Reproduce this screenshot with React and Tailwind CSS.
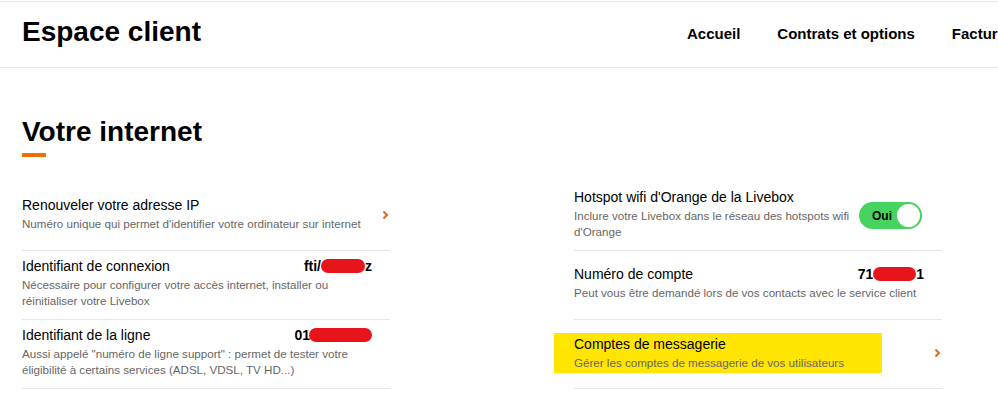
const ROWS = [
  {
    left: {
      title: 'Renouveler votre adresse IP',
      desc: "Numéro unique qui permet d'identifier votre ordinateur sur internet",
      chevron: true,
    },
    right: {
      title: "Hotspot wifi d'Orange de la Livebox",
      desc: "Inclure votre Livebox dans le réseau des hotspots wifi d'Orange",
      toggle: true,
    },
  },
  {
    left: {
      title: 'Identifiant de connexion',
      desc: 'Nécessaire pour configurer votre accès internet, installer ou réinitialiser votre Livebox',
      value: ['fti/', 'w-[44px]', 'z'],
    },
    right: {
      title: 'Numéro de compte',
      desc: 'Peut vous être demandé lors de vos contacts avec le service client',
      value: ['71', 'w-[43px]', '1'],
    },
  },
  {
    left: {
      title: 'Identifiant de la ligne',
      desc: 'Aussi appelé "numéro de ligne support" : permet de tester votre éligibilité à certains services (ADSL, VDSL, TV HD...)',
      value: ['01', 'w-[63px] -ml-[1px]', ''],
    },
    right: {
      title: 'Comptes de messagerie',
      desc: 'Gérer les comptes de messagerie de vos utilisateurs',
      chevron: true,
      highlight: true,
    },
  },
]

function Chevron() {
  return (
    <svg width="7" height="10" viewBox="0 0 7 10" className="shrink-0 mt-[4px] mr-[1px]">
      <path d="M1.5 1.5 5 5 1.5 8.5" fill="none" stroke="#dc6a24" strokeWidth="2" />
    </svg>
  )
}

function Redacted({ value }) {
  const [before, pillWidth, after] = value
  return (
    <span className="flex items-center whitespace-nowrap text-[14px] font-bold leading-[20px] text-black">
      {before}
      <span className={`inline-block h-[14px] rounded-full bg-[#e8141b] ${pillWidth}`} />
      {after}
    </span>
  )
}

function Toggle() {
  return (
    <div className="ml-auto mr-[20px] mt-[5px] flex h-[27px] w-[63px] shrink-0 items-center rounded-full bg-[#47d35f]">
      <span className="ml-[13px] text-[12px] font-bold leading-none text-black">Oui</span>
      <span className="ml-auto mr-[2px] h-[23px] w-[23px] rounded-full bg-white" />
    </div>
  )
}

function Cell({ item }) {
  const text = (
    <div className={item.toggle ? 'w-[280px]' : 'flex-1'}>
      <div className="flex items-center justify-between pr-[18px]">
        <span className="text-[14px] leading-[20px] text-black">{item.title}</span>
        {item.value ? <Redacted value={item.value} /> : null}
      </div>
      <p className={`mt-[1px] text-[11.6px] leading-[16px] text-[#666] ${item.toggle ? '' : 'pr-[18px]'}`}>
        {item.desc}
      </p>
    </div>
  )

  return (
    <div className="flex h-[69px] items-center border-b border-[#e6e6e6] pb-[6px]">
      {item.highlight ? (
        <div className="-ml-[20px] mt-[4px] w-[328px] bg-[#ffe500] pb-[2px] pl-[20px] pt-[1px]">{text}</div>
      ) : (
        text
      )}
      {item.toggle ? <Toggle /> : null}
      {item.chevron ? <div className="ml-auto flex">{<Chevron />}</div> : null}
    </div>
  )
}

export default function App() {
  return (
    <div className="h-[407px] w-[998px] overflow-hidden bg-white font-['Liberation_Sans',Arial,sans-serif] text-black">
      <header className="mt-[1px] flex h-[67px] items-start overflow-hidden border-y border-[#e9e9e9] px-[22px]">
        <h1 className="mt-[16px] w-[665px] shrink-0 text-[28px] font-bold leading-none">Espace client</h1>
        <nav className="mt-[24px] flex shrink-0 gap-[37px] whitespace-nowrap text-[15px] font-bold leading-none">
          <span>Accueil</span>
          <span>Contrats et options</span>
          <span>Factures et paiements</span>
        </nav>
      </header>

      <main className="px-[22px]">
        <h2 className="mt-[48px] text-[28px] font-bold leading-[32px]">Votre internet</h2>
        <div className="mt-[5px] h-[4px] w-[24px] bg-[#f16e00]" />

        <div className="mt-[25px] grid w-[920px] grid-cols-2 gap-x-[184px]">
          {ROWS.map((row, i) => [
            <Cell key={`l${i}`} item={row.left} />,
            <Cell key={`r${i}`} item={row.right} />,
          ])}
        </div>
      </main>
    </div>
  )
}
